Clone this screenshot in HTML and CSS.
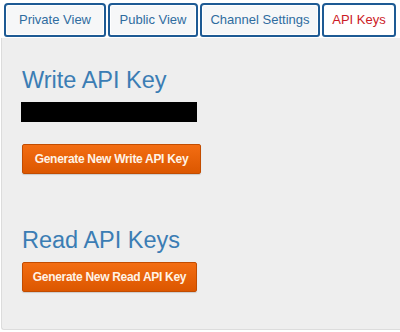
FILE: index.html
```html
<!DOCTYPE html>
<html>
<head>
<meta charset="utf-8">
<link rel="stylesheet" href="styles.css">
</head>
<body>
<ul class="tabs">
  <li class="tab">Private View</li>
  <li class="tab">Public View</li>
  <li class="tab">Channel Settings</li>
  <li class="tab active">API Keys</li>
</ul>
<div class="panel">
  <h2 class="title first">Write API Key</h2>
  <div class="key"></div>
  <button class="btn btn-write">Generate New Write API Key</button>
  <h2 class="title second">Read API Keys</h2>
  <button class="btn btn-read">Generate New Read API Key</button>
</div>
</body>
</html>
```
FILE: styles.css
```css
html, body {
  margin: 0;
  padding: 0;
  background: #ffffff;
  width: 400px;
  height: 332px;
  overflow: hidden;
}
.tabs {
  list-style: none;
  margin: 3px 0 0 0;
  padding: 0 0 0 4px;
  display: flex;
  gap: 2px;
}
.tab {
  box-sizing: border-box;
  height: 34px;
  border: 2px solid #1d5a94;
  border-radius: 4px 4px 3px 3px;
  background: #f6f7f8;
  box-shadow: inset 0 0 0 1px #ffffff;
  display: flex;
  align-items: center;
  justify-content: center;
  font-family: "Liberation Sans", Arial, sans-serif;
  font-size: 13px;
  color: #2f6c9f;
  padding: 0 0 1px 0;
}
.tab:nth-child(1) { width: 102px; }
.tab:nth-child(2) { width: 90px; }
.tab:nth-child(3) { width: 120px; }
.tab:nth-child(4) { width: 74px; }
.tab.active {
  background: #ffffff;
  color: #cc1a26;
}
.panel {
  box-sizing: border-box;
  margin: 1px 0 0 1px;
  width: 399px;
  height: 292px;
  background: #eeeeee;
  border: 1px solid #dcdcdc;
  border-top: none;
  border-right: none;
  border-radius: 0 0 0 3px;
  padding: 29px 0 0 19px;
}
.title {
  margin: 0 0 0 1px;
  font-family: "Liberation Sans", Arial, sans-serif;
  font-weight: normal;
  font-size: 23.5px;
  line-height: 27px;
  color: #3b7db4;
}
.key {
  margin-top: 8px;
  width: 176px;
  height: 20px;
  background: #000000;
}
.btn {
  display: block;
  box-sizing: border-box;
  height: 30px;
  padding: 0;
  border: 1px solid #c24c00;
  border-radius: 2px;
  background: linear-gradient(#f36d12, #dc5700);
  color: #fff3e6;
  font-family: "Liberation Sans", Arial, sans-serif;
  font-weight: bold;
  font-size: 12px;
  letter-spacing: -0.3px;
  box-shadow: 0 1px 1px rgba(0,0,0,0.15);
  margin-left: 1px;
}
.btn-write {
  margin-top: 22px;
  width: 179px;
}
.title.second {
  margin-top: 53px;
}
.btn-read {
  margin-top: 8px;
  width: 175px;
}
```
